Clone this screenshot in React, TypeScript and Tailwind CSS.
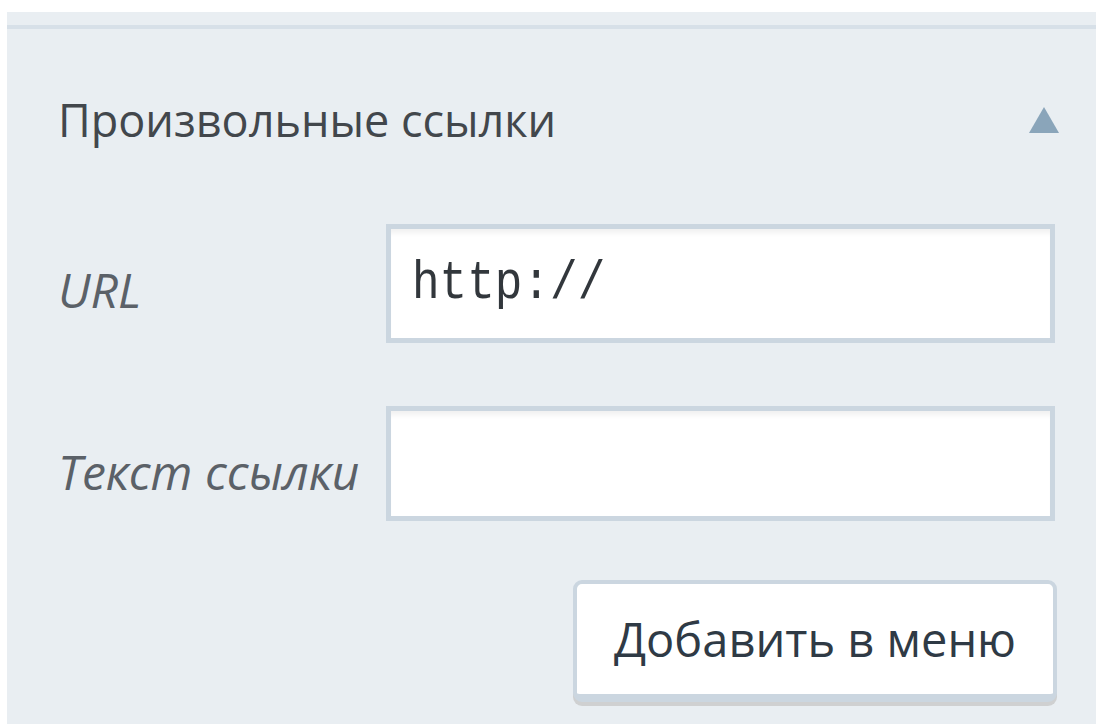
import React from "react";

const sans = { fontFamily: '"Open Sans", "Noto Sans", sans-serif' };

function Field({
  label,
  value,
  className,
  boxHeight,
  labelShift,
}: {
  label: string;
  value?: string;
  className?: string;
  boxHeight: string;
  labelShift: string;
}) {
  return (
    <div className={"flex items-center " + (className ?? "")}>
      <div className={"w-[328px] shrink-0 text-[48px] italic leading-none text-[#5b6168] " + labelShift} style={sans}>
        {label}
      </div>
      <div
        className={
          "flex w-[669px] items-center border-[5px] border-[#cbd6e0] bg-white pl-[21px] shadow-[inset_0_7px_5px_-3px_rgba(0,0,0,0.06)] " +
          boxHeight
        }
      >
        {value ? (
          <span
            className="inline-block scale-y-[1.15] text-[46px] leading-none text-[#32373c]"
            style={{ fontFamily: '"Liberation Mono", "DejaVu Sans Mono", monospace' }}
          >
            {value}
          </span>
        ) : null}
      </div>
    </div>
  );
}

export default function App() {
  return (
    <div className="h-[724px] w-[1096px] overflow-hidden bg-white pl-[7px] pt-[12px]">
      <div className="flex h-full flex-col bg-[#e9eef2]">
        <div className="mt-[13px] h-[4px] bg-[#d7e0e8]" />
        <div className="flex items-center justify-between pl-[51px] pr-[37px] pt-[68px]">
          <span className="text-[45px] leading-none text-[#42474c]" style={sans}>
            Произвольные ссылки
          </span>
          <svg width="30" height="26" viewBox="0 0 30 26" className="block">
            <path d="M15 0 L30 26 L0 26 Z" fill="#8aa5ba" />
          </svg>
        </div>
        <div className="pl-[51px]">
          <Field label="URL" value="http://" className="mt-[82px]" boxHeight="h-[119px]" labelShift="pt-[12px]" />
          <Field label="Текст ссылки" className="mt-[63px]" boxHeight="h-[115px]" labelShift="pt-[16px]" />
          <div className="mt-[59px] flex w-[999px] justify-end">
            <button
              className="flex h-[122px] w-[484px] items-center justify-center rounded-[9px] border-[4px] border-b-[8px] border-[#cbd6e0] bg-white text-[47px] leading-none text-[#2f3a45] shadow-[0_4px_0_#cfd0d1]"
              style={sans}
            >
              Добавить в меню
            </button>
          </div>
        </div>
      </div>
    </div>
  );
}
